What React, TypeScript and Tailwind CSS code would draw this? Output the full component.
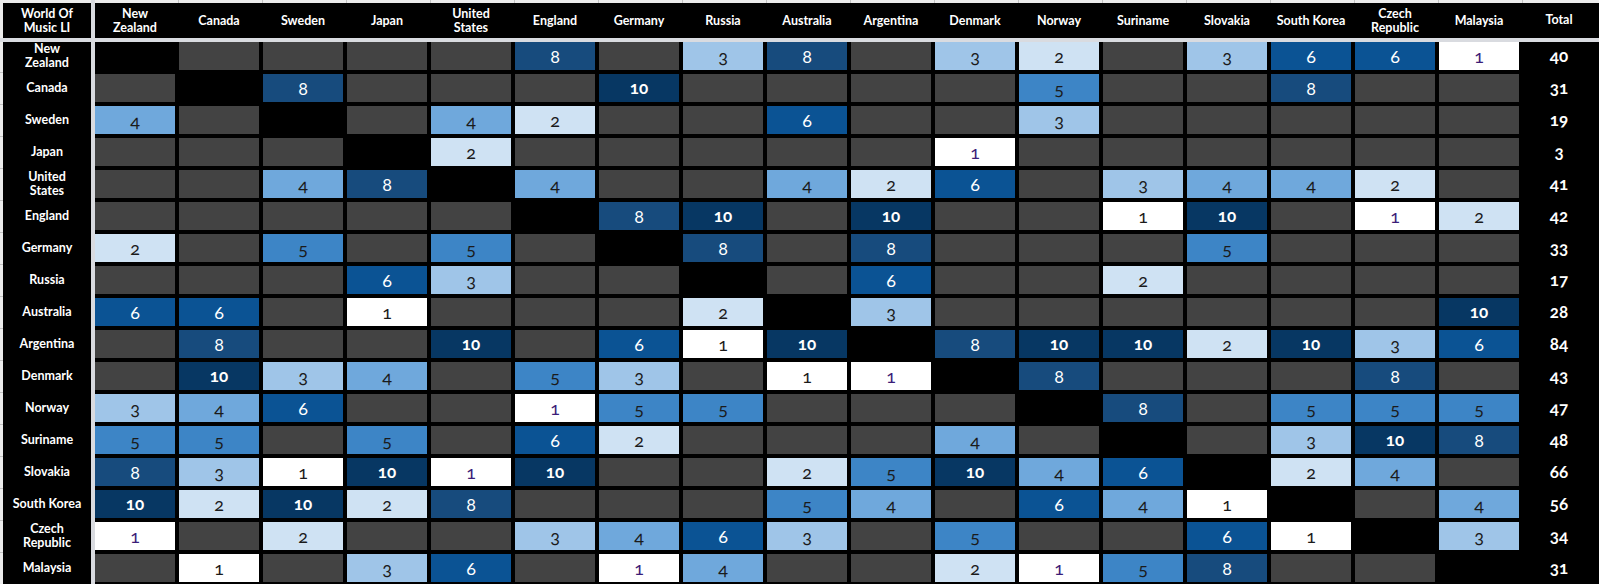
import React from "react";

// column + row names (line breaks where the sheet wraps them)
const cols = [
  "New\nZealand", "Canada", "Sweden", "Japan", "United\nStates", "England", "Germany", "Russia",
  "Australia", "Argentina", "Denmark", "Norway", "Suriname", "Slovakia", "South Korea", "Czech\nRepublic", "Malaysia",
];

// "." = no vote, "x" = own country, "1p" = a 1 shown in purple
const rows: { name: string; cells: string; total: number }[] = [
  { name: "New\nZealand", cells: "x . . . . 8 . 3 8 . 3 2 . 3 6 6 1p", total: 40 },
  { name: "Canada", cells: ". x 8 . . . 10 . . . . 5 . . 8 . .", total: 31 },
  { name: "Sweden", cells: "4 . x . 4 2 . . 6 . . 3 . . . . .", total: 19 },
  { name: "Japan", cells: ". . . x 2 . . . . . 1p . . . . . .", total: 3 },
  { name: "United\nStates", cells: ". . 4 8 x 4 . . 4 2 6 . 3 4 4 2 .", total: 41 },
  { name: "England", cells: ". . . . . x 8 10 . 10 . . 1 10 . 1p 2", total: 42 },
  { name: "Germany", cells: "2 . 5 . 5 . x 8 . 8 . . . 5 . . .", total: 33 },
  { name: "Russia", cells: ". . . 6 3 . . x . 6 . . 2 . . . .", total: 17 },
  { name: "Australia", cells: "6 6 . 1 . . . 2 x 3 . . . . . . 10", total: 28 },
  { name: "Argentina", cells: ". 8 . . 10 . 6 1 10 x 8 10 10 2 10 3 6", total: 84 },
  { name: "Denmark", cells: ". 10 3 4 . 5 3 . 1 1p x 8 . . . 8 .", total: 43 },
  { name: "Norway", cells: "3 4 6 . . 1p 5 5 . . . x 8 . 5 5 5", total: 47 },
  { name: "Suriname", cells: "5 5 . 5 . 6 2 . . . 4 . x . 3 10 8", total: 48 },
  { name: "Slovakia", cells: "8 3 1 10 1p 10 . . 2 5 10 4 6 x 2 4 .", total: 66 },
  { name: "South Korea", cells: "10 2 10 2 8 . . . 5 4 . 6 4 1 x . 4", total: 56 },
  { name: "Czech\nRepublic", cells: "1p . 2 . . 3 4 6 3 . 5 . . 6 1 x 3", total: 34 },
  { name: "Malaysia", cells: ". 1 . 3 6 . 1p 4 . . 2 1p 5 8 . . x", total: 31 },
];

const cellStyle: Record<string, string> = {
  ".": "bg-[#434343]",
  x: "bg-black",
  "1": "bg-white text-[#1b1b1b] text-[18px]",
  "1p": "bg-white text-[#3b1d78] text-[18px]",
  "2": "bg-[#cfe2f3] text-[#1b1b1b] text-[18px]",
  "3": "bg-[#9fc5e8] text-[#1b1b1b] text-[18px]",
  "4": "bg-[#6fa8dc] text-[#1b1b1b] text-[18px]",
  "5": "bg-[#3d85c6] text-[#1b1b1b] text-[18px]",
  "6": "bg-[#0b5394] text-white text-[18px]",
  "8": "bg-[#174b7d] text-white text-[18px]",
  "10": "bg-[#073763] text-white font-bold text-[17px]",
};

function Cell({ v }: { v: string }) {
  const label = v === "." || v === "x" ? "" : v.replace("p", "");
  return (
    <div className={`flex h-[28px] w-[80px] flex-none items-center justify-center oldstyle-nums ${cellStyle[v]}`}>
      {label}
    </div>
  );
}

export default function App() {
  return (
    <div className="grid h-[584px] w-[1599px] grid-cols-[3px_88px_4px_1504px] grid-rows-[3px_35px_4px_542px] overflow-hidden bg-black font-['Lato',sans-serif]">
      {/* sheet frame strip */}
      <div className="bg-[#ececec]" />
      <div className="bg-[#ececec]" />
      <div className="bg-[#d9dbe0]" />
      <div className="flex bg-[#ececec]">
        {cols.map((c) => (
          <div key={c} className="h-full w-[84px] flex-none border-r border-[#c2c2c2]" />
        ))}
      </div>

      {/* header row */}
      <div className="bg-[#ececec]" />
      <div className="flex items-center justify-center whitespace-pre-line text-center text-[12.5px] font-bold leading-[14px] text-white">
        {"World Of\nMusic LI"}
      </div>
      <div className="bg-[#d9dbe0]" />
      <div className="flex">
        <div className="flex gap-[4px]">
          {cols.map((c) => (
            <div key={c} className="flex w-[80px] flex-none items-center justify-center whitespace-pre-line text-center text-[12.5px] font-bold leading-[14px] text-white">
              {c}
            </div>
          ))}
        </div>
        <div className="flex w-[80px] flex-none items-center justify-center text-[12.5px] font-bold text-white">Total</div>
      </div>

      {/* divider under header */}
      <div className="col-span-4 bg-[#d9dbe0]" />

      {/* body */}
      <div className="flex flex-col bg-[#ececec]">
        {rows.map((r) => (
          <div key={r.name} className="h-[32px] flex-none">
            <div className="h-[30px]" />
            <div className="h-[1px] bg-[#c2c2c2]" />
          </div>
        ))}
      </div>
      <div className="flex flex-col">
        {rows.map((r) => (
          <div key={r.name} className="flex h-[32px] flex-none items-start">
            <div className="flex h-[28px] w-full items-center justify-center whitespace-pre-line text-center text-[12.5px] font-bold leading-[14px] text-white">
              {r.name}
            </div>
          </div>
        ))}
      </div>
      <div className="bg-[#d9dbe0]" />
      <div className="flex flex-col">
        {rows.map((r) => (
          <div key={r.name} className="flex h-[32px] flex-none items-start">
            <div className="flex gap-[4px]">
              {r.cells.split(" ").map((v, i) => (
                <Cell key={i} v={v} />
              ))}
            </div>
            <div className="flex h-[28px] w-[80px] flex-none items-center justify-center text-[17px] font-bold text-white oldstyle-nums">
              {r.total}
            </div>
          </div>
        ))}
      </div>
    </div>
  );
}
